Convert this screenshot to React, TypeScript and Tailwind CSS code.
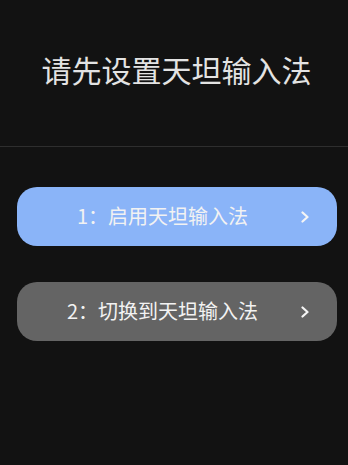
import React from 'react';

const steps = [
  { label: '1：启用天坦输入法', bg: 'bg-[#8ab4f8]' },
  { label: '2：切换到天坦输入法', bg: 'bg-[#646464]' },
];

function Chevron() {
  return (
    <svg width="10" height="12" viewBox="0 0 10 12" className="shrink-0">
      <polyline
        points="2.5,1.5 7.5,6 2.5,10.5"
        fill="none"
        stroke="#f5f5f5"
        strokeWidth="2.2"
        strokeLinecap="round"
        strokeLinejoin="round"
      />
    </svg>
  );
}

export default function App() {
  return (
    <div
      className="w-[348px] h-[465px] bg-[#121212] text-[#e8e8e8]"
      style={{ fontFamily: '"Noto Sans CJK SC", "Noto Sans", sans-serif' }}
    >
      {/* header */}
      <div className="h-[147px] border-b border-[#2e2e2e] pt-[54px] pl-[5px]">
        <h1 className="text-center text-[30px] leading-[30px] font-normal text-[#e3e3e3]">
          请先设置天坦输入法
        </h1>
      </div>

      {/* setup steps */}
      <div className="flex flex-col gap-[36px] pt-[40px] pl-[17px]">
        {steps.map((s) => (
          <button
            key={s.label}
            className={`${s.bg} w-[320px] h-[59px] rounded-[20px] flex items-center pl-[8px] pr-[27px]`}
          >
            <span className="flex-1 text-center text-[20px] leading-none text-[#f2f2f2] pb-[1px]">
              {s.label}
            </span>
            <Chevron />
          </button>
        ))}
      </div>
    </div>
  );
}
